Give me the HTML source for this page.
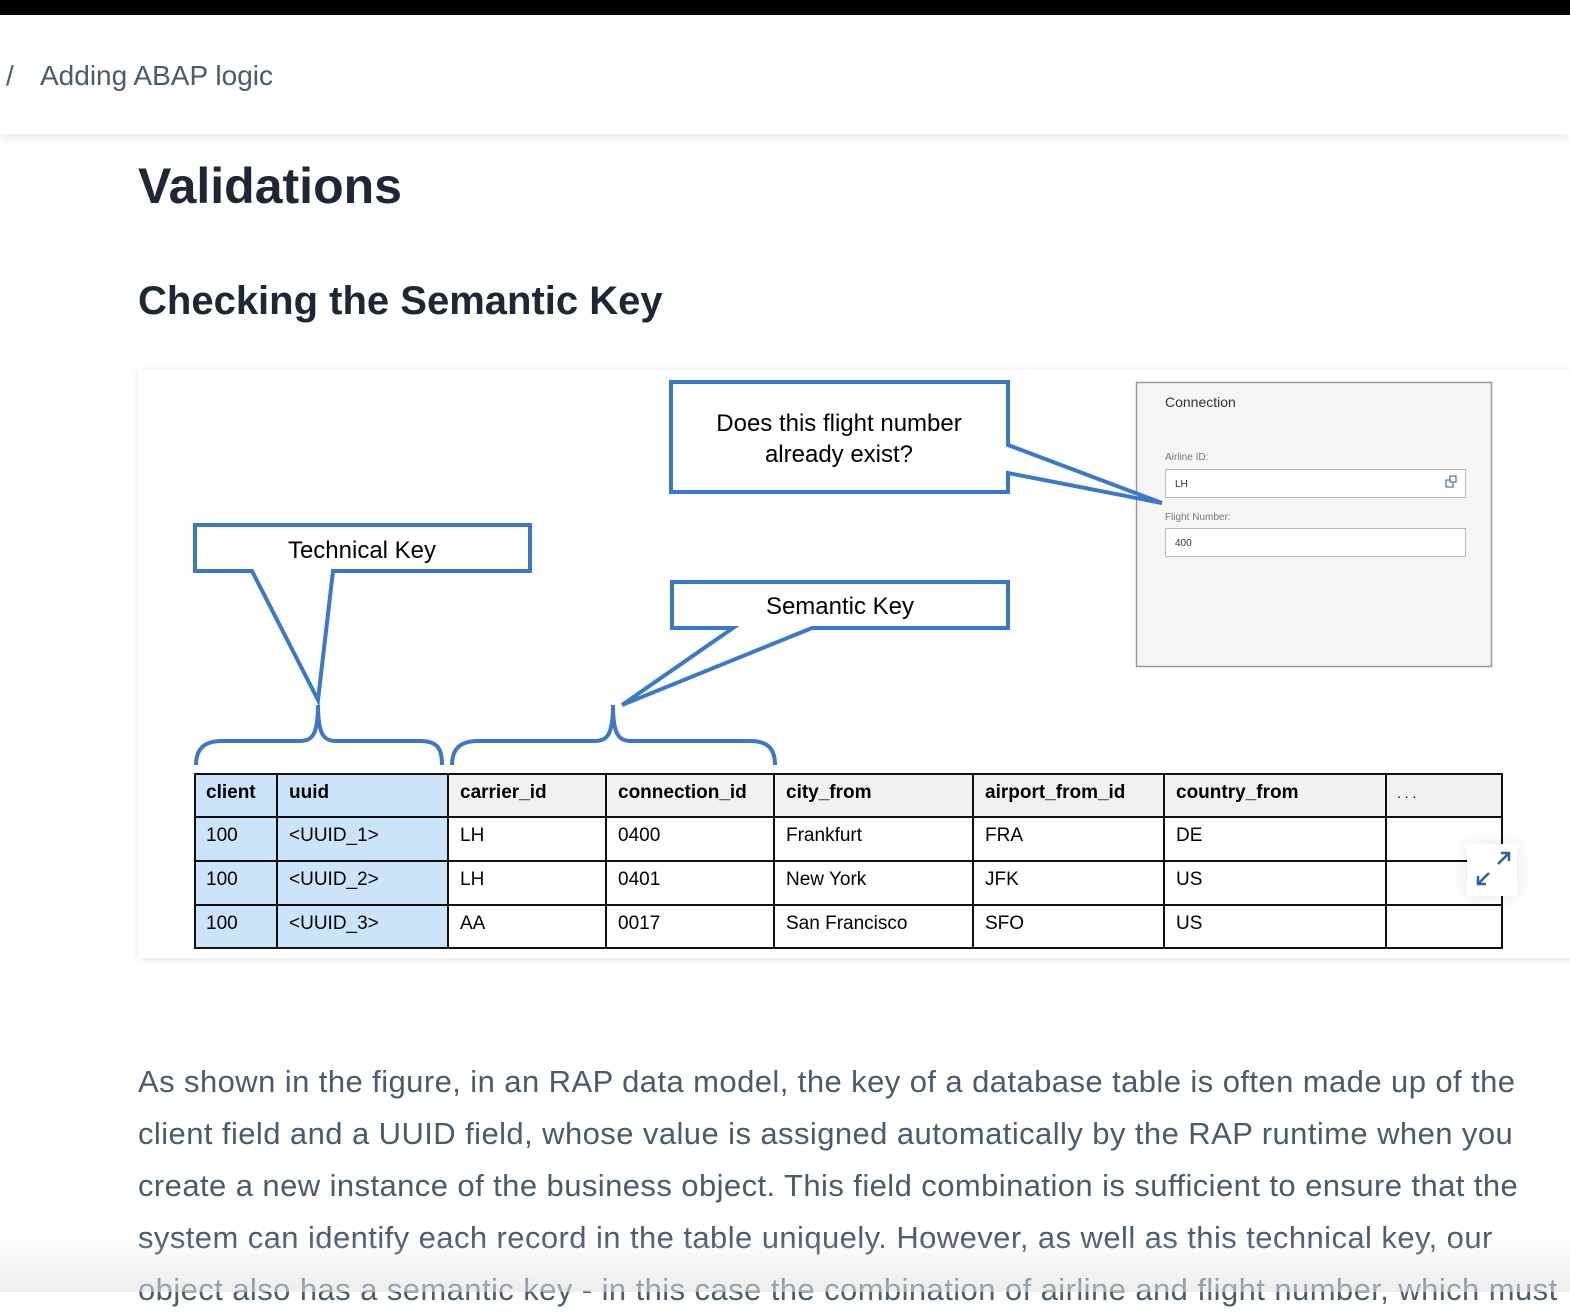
<!DOCTYPE html>
<html><head><meta charset="utf-8"><style>
*{margin:0;padding:0;box-sizing:border-box}
body{width:1570px;height:1292px;overflow:hidden;background:#fff;font-family:"Liberation Sans",Arial,sans-serif;position:relative}
.topbar{position:absolute;left:0;top:0;width:1570px;height:15px;background:#000}
.crumb{position:absolute;left:0;top:15px;width:1570px;height:119px;background:#fff;box-shadow:0 4px 10px rgba(0,0,0,0.08);z-index:2}
.crumb span{position:absolute;top:45px;font-size:28px;color:#4a5a72}
h1{position:absolute;left:138px;top:157px;font-size:50px;font-weight:bold;color:#1d2735}
h2{position:absolute;left:138px;top:279px;font-size:40px;font-weight:bold;color:#1d2735}
.card{position:absolute;left:138px;top:370px;width:1440px;height:588px;background:#fff;box-shadow:0 1px 6px rgba(0,0,0,0.12)}
.para{position:absolute;left:138px;top:1056px;font-size:31px;letter-spacing:0.42px;line-height:52px;color:#4a5a72;white-space:nowrap}
.fade{position:absolute;left:0;top:1235px;width:1570px;height:57px;background:linear-gradient(rgba(255,255,255,0),rgba(225,225,225,0.6))}
</style></head><body>
<div class="topbar"></div>
<div class="crumb"><span style="left:6px">/</span><span style="left:40px">Adding ABAP logic</span></div>
<h1>Validations</h1>
<h2>Checking the Semantic Key</h2>
<div class="card"></div>
<svg style="position:absolute;left:0;top:0" width="1570" height="1292" font-family="Liberation Sans, Arial, sans-serif">
<rect x="1136.5" y="382.5" width="355" height="284" fill="#f6f6f6" stroke="#999" stroke-width="1.5"/>
<text x="1165" y="407" font-size="14" fill="#333">Connection</text>
<text x="1165" y="460" font-size="10" fill="#777">Airline ID:</text>
<rect x="1165.5" y="469.5" width="300" height="28" fill="#fff" stroke="#bbb"/>
<text x="1175" y="487" font-size="10" fill="#333">LH</text>
<rect x="1446" y="480" width="7" height="7" fill="none" stroke="#4a6fb0" stroke-width="1.2"/>
<rect x="1450" y="476" width="6" height="6" fill="#fff" stroke="#4a6fb0" stroke-width="1.2"/>
<text x="1165" y="520" font-size="10" fill="#777">Flight Number:</text>
<rect x="1165.5" y="528.5" width="300" height="28" fill="#fff" stroke="#bbb"/>
<text x="1175" y="546" font-size="10" fill="#333">400</text>
<g fill="#fff" stroke="#3a78c9" stroke-width="4" stroke-linejoin="miter">
<path d="M671 382 H1008 V445 L1162 503 L1008 473 V492 H671 Z"/>
<path d="M195 525 H530 V571 H333 L318 700 L252 571 H195 Z"/>
<path d="M672 582 H1008 V628 H812 L622 705 L733 628 H672 Z"/>
</g>
<g fill="#000" font-size="24" text-anchor="middle">
<text x="839" y="431">Does this flight number</text>
<text x="839" y="462">already  exist?</text>
<text x="362" y="558">Technical Key</text>
<text x="840" y="614">Semantic Key</text>
</g>
<g fill="none" stroke="#3a78c9" stroke-width="4">
<path d="M196 765 C196 748 205 741 222 741 H300 C312 741 318 735 318 705 C318 735 324 741 336 741 H420 C437 741 442 748 442 765"/>
<path d="M452 765 C452 748 461 741 478 741 H595 C607 741 613 735 613 705 C613 735 619 741 631 741 H750 C767 741 775 748 775 765"/>
</g>
<rect x="195" y="774" width="253" height="174" fill="#cce4fa"/>
<rect x="448" y="774" width="1054" height="43" fill="#f1f1f1"/>
<g stroke="#111" stroke-width="2" fill="none">
<rect x="195" y="774" width="1307" height="174"/>
<line x1="195" y1="817" x2="1502" y2="817"/>
<line x1="195" y1="861" x2="1502" y2="861"/>
<line x1="195" y1="905" x2="1502" y2="905"/>
<line x1="277" y1="774" x2="277" y2="948"/>
<line x1="448" y1="774" x2="448" y2="948"/>
<line x1="606" y1="774" x2="606" y2="948"/>
<line x1="774" y1="774" x2="774" y2="948"/>
<line x1="973" y1="774" x2="973" y2="948"/>
<line x1="1164" y1="774" x2="1164" y2="948"/>
<line x1="1386" y1="774" x2="1386" y2="948"/>
</g>
<g font-size="19" fill="#000">
<g font-weight="bold">
<text x="206" y="798">client</text><text x="289" y="798">uuid</text><text x="460" y="798">carrier_id</text><text x="618" y="798">connection_id</text><text x="786" y="798">city_from</text><text x="985" y="798">airport_from_id</text><text x="1176" y="798">country_from</text>
</g>
<text x="1397" y="798" font-size="14">. . .</text>
<text x="206" y="841">100</text><text x="289" y="841">&lt;UUID_1&gt;</text><text x="460" y="841">LH</text><text x="618" y="841">0400</text><text x="786" y="841">Frankfurt</text><text x="985" y="841">FRA</text><text x="1176" y="841">DE</text>
<text x="206" y="885">100</text><text x="289" y="885">&lt;UUID_2&gt;</text><text x="460" y="885">LH</text><text x="618" y="885">0401</text><text x="786" y="885">New York</text><text x="985" y="885">JFK</text><text x="1176" y="885">US</text>
<text x="206" y="929">100</text><text x="289" y="929">&lt;UUID_3&gt;</text><text x="460" y="929">AA</text><text x="618" y="929">0017</text><text x="786" y="929">San Francisco</text><text x="985" y="929">SFO</text><text x="1176" y="929">US</text>
</g>
<rect x="1467" y="844" width="50" height="52" rx="3" fill="#fff" style="filter:drop-shadow(0 0 8px rgba(0,0,0,0.1))"/>
<g stroke="#2d5fb0" stroke-width="2.5" fill="none">
<path d="M1498 864 L1509 853 M1501 853 H1509 V861"/>
<path d="M1489 873 L1478 884 M1478 876 V884 H1486"/>
</g>
</svg>
<div class="para">As shown in the figure, in an RAP data model, the key of a database table is often made up of the<br>client field and a UUID field, whose value is assigned automatically by the RAP runtime when you<br>create a new instance of the business object. This field combination is sufficient to ensure that the<br>system can identify each record in the table uniquely. However, as well as this technical key, our<br>object also has a semantic key - in this case the combination of airline and flight number, which must</div>
<div class="fade"></div>
</body></html>
